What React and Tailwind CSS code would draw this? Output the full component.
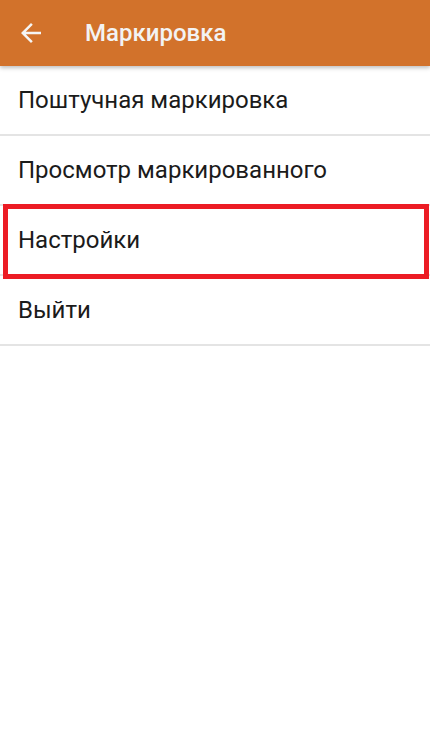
import React from 'react';

const items = ['Поштучная маркировка', 'Просмотр маркированного', 'Настройки', 'Выйти'];

export default function App() {
  return (
    <div className="min-h-[738px] bg-white" style={{ fontFamily: 'Roboto, "Noto Sans", sans-serif' }}>
      {/* Toolbar */}
      <div className="relative z-10 flex h-[66px] items-center bg-[#d2722b] shadow-[0_2px_4px_rgba(0,0,0,0.25)]">
        <div className="flex w-[85px] items-center pl-[16px]">
          <svg width="30" height="30" viewBox="0 0 24 24" className="h-[30px] w-[30px]">
            <path d="M20 11H7.83l5.59-5.59L12 4l-8 8 8 8 1.41-1.41L7.83 13H20v-2z" fill="#f5f5f5" />
          </svg>
        </div>
        <h1 className="text-[24px] font-medium text-[#f3f3f3] leading-none">Маркировка</h1>
      </div>

      {/* Menu */}
      <div className="flex flex-col">
        {items.map((label, i) => (
          <div key={label} className="relative flex h-[70px] items-center border-b-2 border-[#e4e4e4] pl-[18px]">
            <span className="text-[24px] text-[#1b1b1b] leading-none">{label}</span>
            {i === 2 && (
              <div className="absolute left-[3px] right-[1px] top-[-2px] bottom-[-5px] border-[5px] border-[#ec1c24]" />
            )}
          </div>
        ))}
      </div>
    </div>
  );
}
